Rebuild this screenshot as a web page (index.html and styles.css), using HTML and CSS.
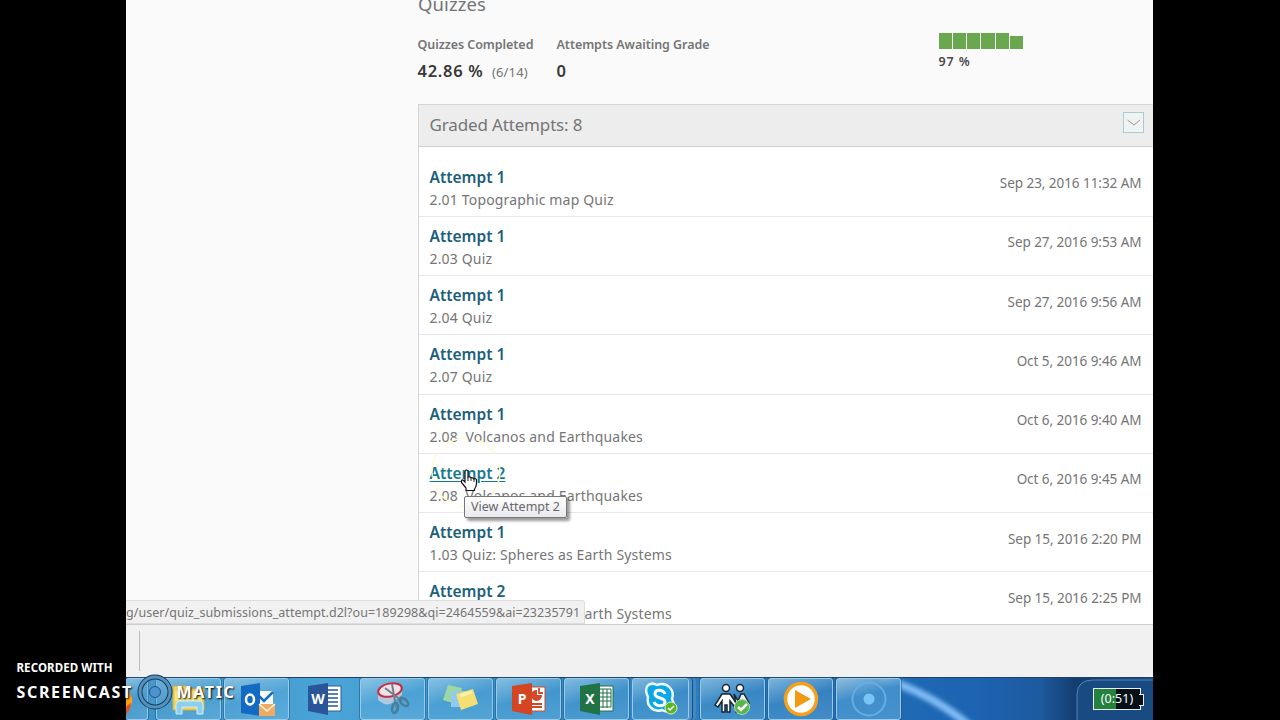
FILE: index.html
```html
<!DOCTYPE html>
<html lang="en">
<head>
<meta charset="utf-8">
<title>Quizzes</title>
<link rel="stylesheet" href="styles.css">
</head>
<body>
<div class="screen">
  <main class="page">
    <h1 class="title">Quizzes</h1>
    <section class="summary">
      <div class="stat stat-done"><div class="label">Quizzes Completed</div><div class="value"><b>42.86 %</b><span class="fraction">(6/14)</span></div></div>
      <div class="stat stat-wait"><div class="label">Attempts Awaiting Grade</div><div class="value"><b>0</b></div></div>
      <div class="grade"><div class="bars"><i></i><i></i><i></i><i></i><i></i><i class="short"></i></div><b class="percent">97 %</b></div>
    </section>
    <section class="panel">
      <header class="panel-head"><span>Graded Attempts: 8</span><button class="toggle" aria-label="Collapse"><svg width="20" height="20" viewBox="0 0 20 20"><path d="M3.500 7 L10 12 L16 7" fill="none" stroke="#999" stroke-width="1"/></svg></button></header>
      <ul class="attempts">
        <li><div><a>Attempt 1</a><p>2.01 Topographic map Quiz</p></div><time>Sep 23, 2016 11:32 AM</time></li>
        <li><div><a>Attempt 1</a><p>2.03 Quiz</p></div><time>Sep 27, 2016 9:53 AM</time></li>
        <li><div><a>Attempt 1</a><p>2.04 Quiz</p></div><time>Sep 27, 2016 9:56 AM</time></li>
        <li><div><a>Attempt 1</a><p>2.07 Quiz</p></div><time>Oct 5, 2016 9:46 AM</time></li>
        <li><div><a>Attempt 1</a><p>2.08&nbsp; Volcanos and Earthquakes</p></div><time>Oct 6, 2016 9:40 AM</time></li>
        <li><div><a class="hover">Attempt 2</a><p>2.08&nbsp; Volcanos and Earthquakes</p></div><time>Oct 6, 2016 9:45 AM</time></li>
        <li><div><a>Attempt 1</a><p>1.03 Quiz: Spheres as Earth Systems</p></div><time>Sep 15, 2016 2:20 PM</time></li>
        <li><div><a>Attempt 2</a><p>1.03 Quiz: Spheres as Earth Systems</p></div><time>Sep 15, 2016 2:25 PM</time></li>
      </ul>
    </section>
  </main>
  <div class="footer"><span class="divider"></span></div>
  <nav class="taskbar">
    <svg class="wall" width="1027" height="43" viewBox="0 0 1027 43" preserveAspectRatio="none">
      <defs><linearGradient id="bg" x1="0" x2="1"><stop offset="0" stop-color="#3d91c5"/><stop offset=".2" stop-color="#4aa4d6"/><stop offset=".45" stop-color="#3289c4"/><stop offset=".68" stop-color="#2470b5"/><stop offset=".83" stop-color="#1c63b2"/><stop offset=".89" stop-color="#1d5a9f"/><stop offset=".925" stop-color="#143d70"/><stop offset="1" stop-color="#174d89"/></linearGradient><filter id="soft" x="-20%" y="-20%" width="140%" height="140%"><feGaussianBlur stdDeviation="2"/></filter></defs>
      <rect width="1027" height="43" fill="url(#bg)"/>
      <path d="M755 0 Q805 15 845 49" fill="none" stroke="#80bcf5" stroke-width="8" filter="url(#soft)"/>
      <path d="M951 43 V17 Q951 2 967 2 H1027 V43Z" fill="#194b83"/><path d="M951 43 V17 Q951 2 967 2 H1027" fill="none" stroke="#5583b1"/>
    </svg>
    <div class="tasks">
      <span class="task first"><svg width="22" height="42" viewBox="0 0 22 42"><path d="M0 12 Q10 19 5 28 Q3 35 0 36Z" fill="#ff9c19"/><path d="M0 29 L5 25 Q5 33 0 37Z" fill="#df5420"/></svg></span>
      <span class="task"><svg width="38" height="36" viewBox="0 0 38 36"><path d="M3 5 H16 L18 8 H34 V29 H3Z" fill="#efd35e" stroke="#d6af3b"/><path d="M5 10 H32 V20 H5Z" fill="#f9e681"/><path d="M6 33 V24 Q6 20 10 20 H29 Q33 20 33 24 V33 H27 V26 H12 V33Z" fill="#8bd0ee" stroke="#cdeffb"/></svg></span>
      <span class="task"><svg width="38" height="38" viewBox="0 0 38 38"><path d="M19 11 H35 V26 H19Z" fill="#fff"/><path d="M20 15 L26 21 L35 12" fill="none" stroke="#176ec0" stroke-width="2.500"/><path d="M3 6 L22 3 V36 L3 33Z" fill="#126ac2"/><ellipse cx="12" cy="19.500" rx="4" ry="5" fill="none" stroke="#fff" stroke-width="2.500"/><path d="M21 24 H37 V36 H21Z" fill="#efaa64"/><path d="M21 24 L29 31 L37 24" fill="none" stroke="#fff1db" stroke-width="1.500"/></svg></span>
      <span class="task plain"><svg width="38" height="38" viewBox="0 0 38 38"><path d="M18 6 H35 V31 H18Z" fill="#fff" stroke="#315d99"/><path d="M21 10H32M21 14H32M21 18H32M21 22H32M21 26H32" stroke="#2b5698" stroke-width="1.500"/><path d="M2 6 L22 3 V35 L2 31Z" fill="#2a5699"/><text class="office" x="12" y="24">W</text></svg></span>
      <span class="task"><svg width="38" height="38" viewBox="0 0 38 38"><path d="M4 12 V20 Q12 27 18 23 L28 15 V9" fill="#c9d1de" opacity=".8"/><ellipse cx="16" cy="10" rx="12" ry="6.500" transform="rotate(-12 16 10)" fill="#eee4e7" stroke="#c72c43" stroke-width="2"/><path d="M11 8 L28 21 M18 4 L22 27" stroke="#73808c" stroke-width="2"/><ellipse cx="21" cy="28" rx="2.800" ry="5" transform="rotate(12 21 28)" fill="none" stroke="#477d9f" stroke-width="2.500"/><ellipse cx="30" cy="22" rx="2.800" ry="5" transform="rotate(-48 30 22)" fill="none" stroke="#477d9f" stroke-width="2.500"/></svg></span>
      <span class="task"><svg width="38" height="38" viewBox="0 0 38 38"><path d="M6 5 L20 8 L17 25 L1 20Z" fill="#9dd8a1"/><path d="M9 11 H26 V27 H9Z" fill="#92caf0"/><path d="M14 14 L31 9 L36 24 L19 30Z" fill="#f5de72"/><path d="M18 16 L30 12" stroke="#fff2a8" stroke-width="3"/></svg></span>
      <span class="task"><svg width="38" height="38" viewBox="0 0 38 38"><path d="M18 7 H35 V31 H18Z" fill="#fff" stroke="#ce4a2a"/><path d="M27 10 A5.500 5.500 0 1 0 32 15 H27Z" fill="#d44a28"/><path d="M29 8 V13 H33M22 24H32M22 27H32" fill="none" stroke="#d44a28" stroke-width="1.800"/><path d="M2 6 L22 3 V35 L2 31Z" fill="#d34523"/><text class="office" x="12" y="24">P</text></svg></span>
      <span class="task"><svg width="38" height="38" viewBox="0 0 38 38"><path d="M18 6 H35 V31 H18Z" fill="#fff" stroke="#1e7248"/><path d="M21 9H33V27H21ZM21 13H33M21 17H33M21 21H33M25 9V28M29 9V28" fill="none" stroke="#217346" stroke-width="1"/><path d="M2 6 L22 3 V35 L2 31Z" fill="#217346"/><text class="office" x="12" y="24">X</text></svg></span>
      <span class="task skype"><svg width="38" height="38" viewBox="0 0 38 38"><path d="M6 17 C1 7 7 1 15 5 C26 1 33 11 30 19 C35 28 27 34 20 30 C12 33 4 26 6 17Z" fill="#08a7e5" stroke="#eaf8ff" stroke-width="2.500"/><path d="M23 14 C21 9 13 9 13 14 C13 19 23 17 23 22 C23 27 14 27 12 22" fill="none" stroke="#fff" stroke-width="3"/><circle cx="29" cy="28" r="6" fill="#5ab424" stroke="#d8f3cf"/><path d="M26 28 L28 30 L32 26" fill="none" stroke="#fff" stroke-width="1.500"/></svg></span>
      <span class="task"><svg width="38" height="38" viewBox="0 0 38 38"><g fill="#fff" stroke="#192532" stroke-width="1.500"><circle cx="12" cy="8" r="3.500"/><circle cx="26" cy="8" r="3.500"/><path d="M8 14 H16 L23 24 L20 26 L16 21 V32 H13 V25 H11 V32 H8 V21 L4 27 L1 25Z"/><path d="M20 14 L24 21 L27 14 H30 L35 23 L32 26 L29 21 V32 H22 V24Z"/></g><circle cx="28" cy="27" r="7.500" fill="#58b54a" stroke="#b1dda6"/><path d="M24 27 L27 30 L33 24" fill="none" stroke="#fff" stroke-width="2.500"/></svg></span>
      <span class="task"><svg width="38" height="38" viewBox="0 0 38 38"><circle cx="19" cy="19" r="15.500" fill="#fff" stroke="#f6a11c" stroke-width="3.500"/><path d="M13 10 L29 19 L13 28Z" fill="#f39a13"/></svg></span>
      <span class="task last"><svg width="38" height="38" viewBox="0 0 38 38"><circle cx="19" cy="19" r="16.500" fill="none" stroke="#64aee2" stroke-width="2"/><circle cx="19" cy="19" r="5.500" fill="#7cc4f7"/></svg></span>
    </div>
    <div class="battery"><span>(0:51)</span></div>
  </nav>
  <div class="status"><span>g/user/quiz_submissions_attempt.d2l?ou=189298&amp;qi=2464559&amp;ai=23235791</span></div>
  <svg class="halo" width="74" height="74" viewBox="0 0 74 74"><circle cx="37" cy="37" r="34" fill="none" stroke="#fffbd0" stroke-width="1.500" stroke-dasharray="24 10"/></svg>
  <div class="tip"><span>View Attempt 2</span></div>
  <svg class="cursor" width="18" height="23" viewBox="0 0 18 23"><path d="M5 13 V2.500 Q5 1 6.500 1 Q8 1 8 2.500 V8 Q9.500 7 11 9 Q12.500 8 13.500 10 Q16 9 16.500 11 V15 Q16 18 14.500 20 V21.500 H6 V19 L1.500 13.500 Q1 10.500 3 11 L5 13Z" fill="#fff" stroke="#111" stroke-width="1.200"/><path d="M8 8V12M11 9V12M14 10V13" stroke="#222"/></svg>
</div>
<div class="watermark">
  <span class="recorded">RECORDED WITH</span>
  <div class="brand"><span class="cast">SCREENCAST</span><svg width="36" height="36" viewBox="0 0 36 36"><circle cx="18" cy="18" r="15" fill="#4f9dcf" fill-opacity=".45" stroke="#173c5b" stroke-width="5"/><circle cx="18" cy="18" r="15" fill="none" stroke="#5591bd" stroke-width="3"/><circle cx="18" cy="18" r="5.500" fill="#4c94d0" stroke="#24547d"/></svg><span class="matic">MATIC</span></div>
</div>
</body>
</html>
```

FILE: styles.css
```css
* { box-sizing: border-box; }
body { margin: 0; width: 1280px; height: 720px; overflow: hidden; position: relative; background: #000; font-family: "Noto Sans", sans-serif; color: #757575; }
.screen { position: relative; width: 1027px; height: 720px; margin-left: 126px; background: #fafafa; overflow: hidden; display: flex; flex-direction: column; }
.page { height: 624px; overflow: hidden; padding-left: 292px; flex: none; }
.title { margin: -10px 0 0; height: 46px; font-size: 18.500px; font-weight: 400; line-height: 27px; letter-spacing: .1px; }
.summary { display: flex; height: 68px; margin-left: -.5px; }
.label { font-size: 12.500px; font-weight: 600; line-height: 17px; height: 22px; white-space: nowrap; letter-spacing: -.05px; }
.stat-done { width: 139px; }
.stat-wait { width: 382px; }
.value { color: #383838; font-size: 16.500px; line-height: 26px; white-space: nowrap; }
.value b { font-weight: 600; letter-spacing: .7px; }
.fraction { font-size: 13px; color: #757575; margin-left: 8.500px; letter-spacing: .15px; }
.bars { display: flex; align-items: flex-end; gap: 1px; height: 16px; margin-top: -3px; }
.bars i { width: 13.300px; height: 16px; background: #6aa84f; }
.bars .short { height: 13px; }
.percent { display: block; font-size: 12.500px; line-height: 25px; color: #484848; font-weight: 600; letter-spacing: .9px; }
.panel { border: 1px solid #d5d5d5; border-right: 0; background: #fff; }
.panel-head { display: flex; justify-content: space-between; height: 42px; padding: 6px 9px 0 10.500px; background: #ededed; border-bottom: 1px solid #d0d0d0; font-size: 17px; line-height: 28px; letter-spacing: -.15px; }
.toggle { width: 21px; height: 21px; margin-top: .5px; padding: 0; border: 1px solid #a9cbd3; background: #f1f3f3; }
.toggle svg { display: block; }
.attempts { list-style: none; margin: 0; padding: 10.500px 0 0; }
.attempts li { display: flex; justify-content: space-between; height: 59.250px; padding: 8px 11.500px 0 10.500px; border-bottom: 1px solid #e8e8e8; }
.attempts a { display: block; width: max-content; font-size: 15.500px; line-height: 23px; font-weight: 600; color: #1b6079; }
.attempts .hover { color: #16788d; text-decoration: underline; text-underline-offset: 2px; }
.attempts p { margin: 0; font-size: 14px; line-height: 22px; white-space: pre; letter-spacing: .17px; }
time { font-size: 13.500px; line-height: 20px; margin-top: 7.500px; letter-spacing: -.05px; }
.footer { height: 53px; flex: none; background: #f1f1f1; border-top: 1px solid #ccc; padding: 6px 13px; }
.divider { display: block; width: 1px; height: 40px; background: #bbb; }
.taskbar { position: relative; height: 43px; flex: none; display: flex; justify-content: space-between; border-top: 1px solid #203f62; }
.wall { position: absolute; inset: 0; }
.tasks { position: relative; display: flex; gap: 3px; }
.task { display: flex; align-items: center; justify-content: center; width: 65px; height: 42px; border: 1px solid #9bcae9; border-radius: 3px; background: linear-gradient(165deg, #b4dbef99, #65afe044 48%, #85c5e955); box-shadow: 0 0 0 1px #1b568b88; }
.task.first { width: 22px; margin-right: 5px; border-left: 0; justify-content: flex-start; overflow: hidden; }
.task.plain { border-color: transparent; background: none; box-shadow: none; }
.task.skype { width: 57px; box-shadow: 3px 0 0 #4d92c6, 4px 0 0 #194f82, 7px 0 0 #408ac4; margin-right: 8px; }
.task.last { background: linear-gradient(165deg, #c4e2f2aa, #3f8dca 42%, #4692cd); }
.office { font: bold 14px "Noto Sans", sans-serif; fill: #fff; text-anchor: middle; }
.battery { position: relative; width: 48px; height: 22px; margin: 10px 12px 0 0; border: 1px solid #eee; background: linear-gradient(90deg, #24823d 47%, #071018 47%); color: #fff; font-size: 12.500px; line-height: 20px; text-align: center; }
.battery::after { content: ""; position: absolute; right: -4px; top: 5px; width: 4px; height: 10px; background: #071018; border: 1px solid #eee; border-left: 0; }
.status { position: absolute; left: 0; top: 599.500px; width: 459px; height: 24px; background: #f1f1f1; border: 1px solid #ddd; border-left: 0; border-radius: 0 3px 0 0; font-size: 12.500px; line-height: 23px; white-space: nowrap; letter-spacing: .04px; }
.tip { position: absolute; left: 338px; top: 496px; width: 103px; height: 22px; padding-left: 6px; background: linear-gradient(#fff, #e8e8ef); border: 1px solid #777; border-radius: 2px; box-shadow: 3px 3px 3px #0006; font-size: 12.500px; line-height: 20px; white-space: nowrap; color: #686868; }
.cursor { position: absolute; left: 334px; top: 469px; }
.halo { position: absolute; left: 303px; top: 435px; }
.watermark { position: absolute; left: 16.500px; top: 660px; color: #fff; font-weight: 700; line-height: 16px; text-shadow: 1px 1px 2px #000; }
.recorded { display: block; font-size: 11.500px; letter-spacing: .08px; }
.brand { display: flex; align-items: center; height: 32px; font-size: 16px; letter-spacing: 1.650px; }
.brand svg { margin: 0 4px 0 2px; }
.cast { width: 118px; }
```
